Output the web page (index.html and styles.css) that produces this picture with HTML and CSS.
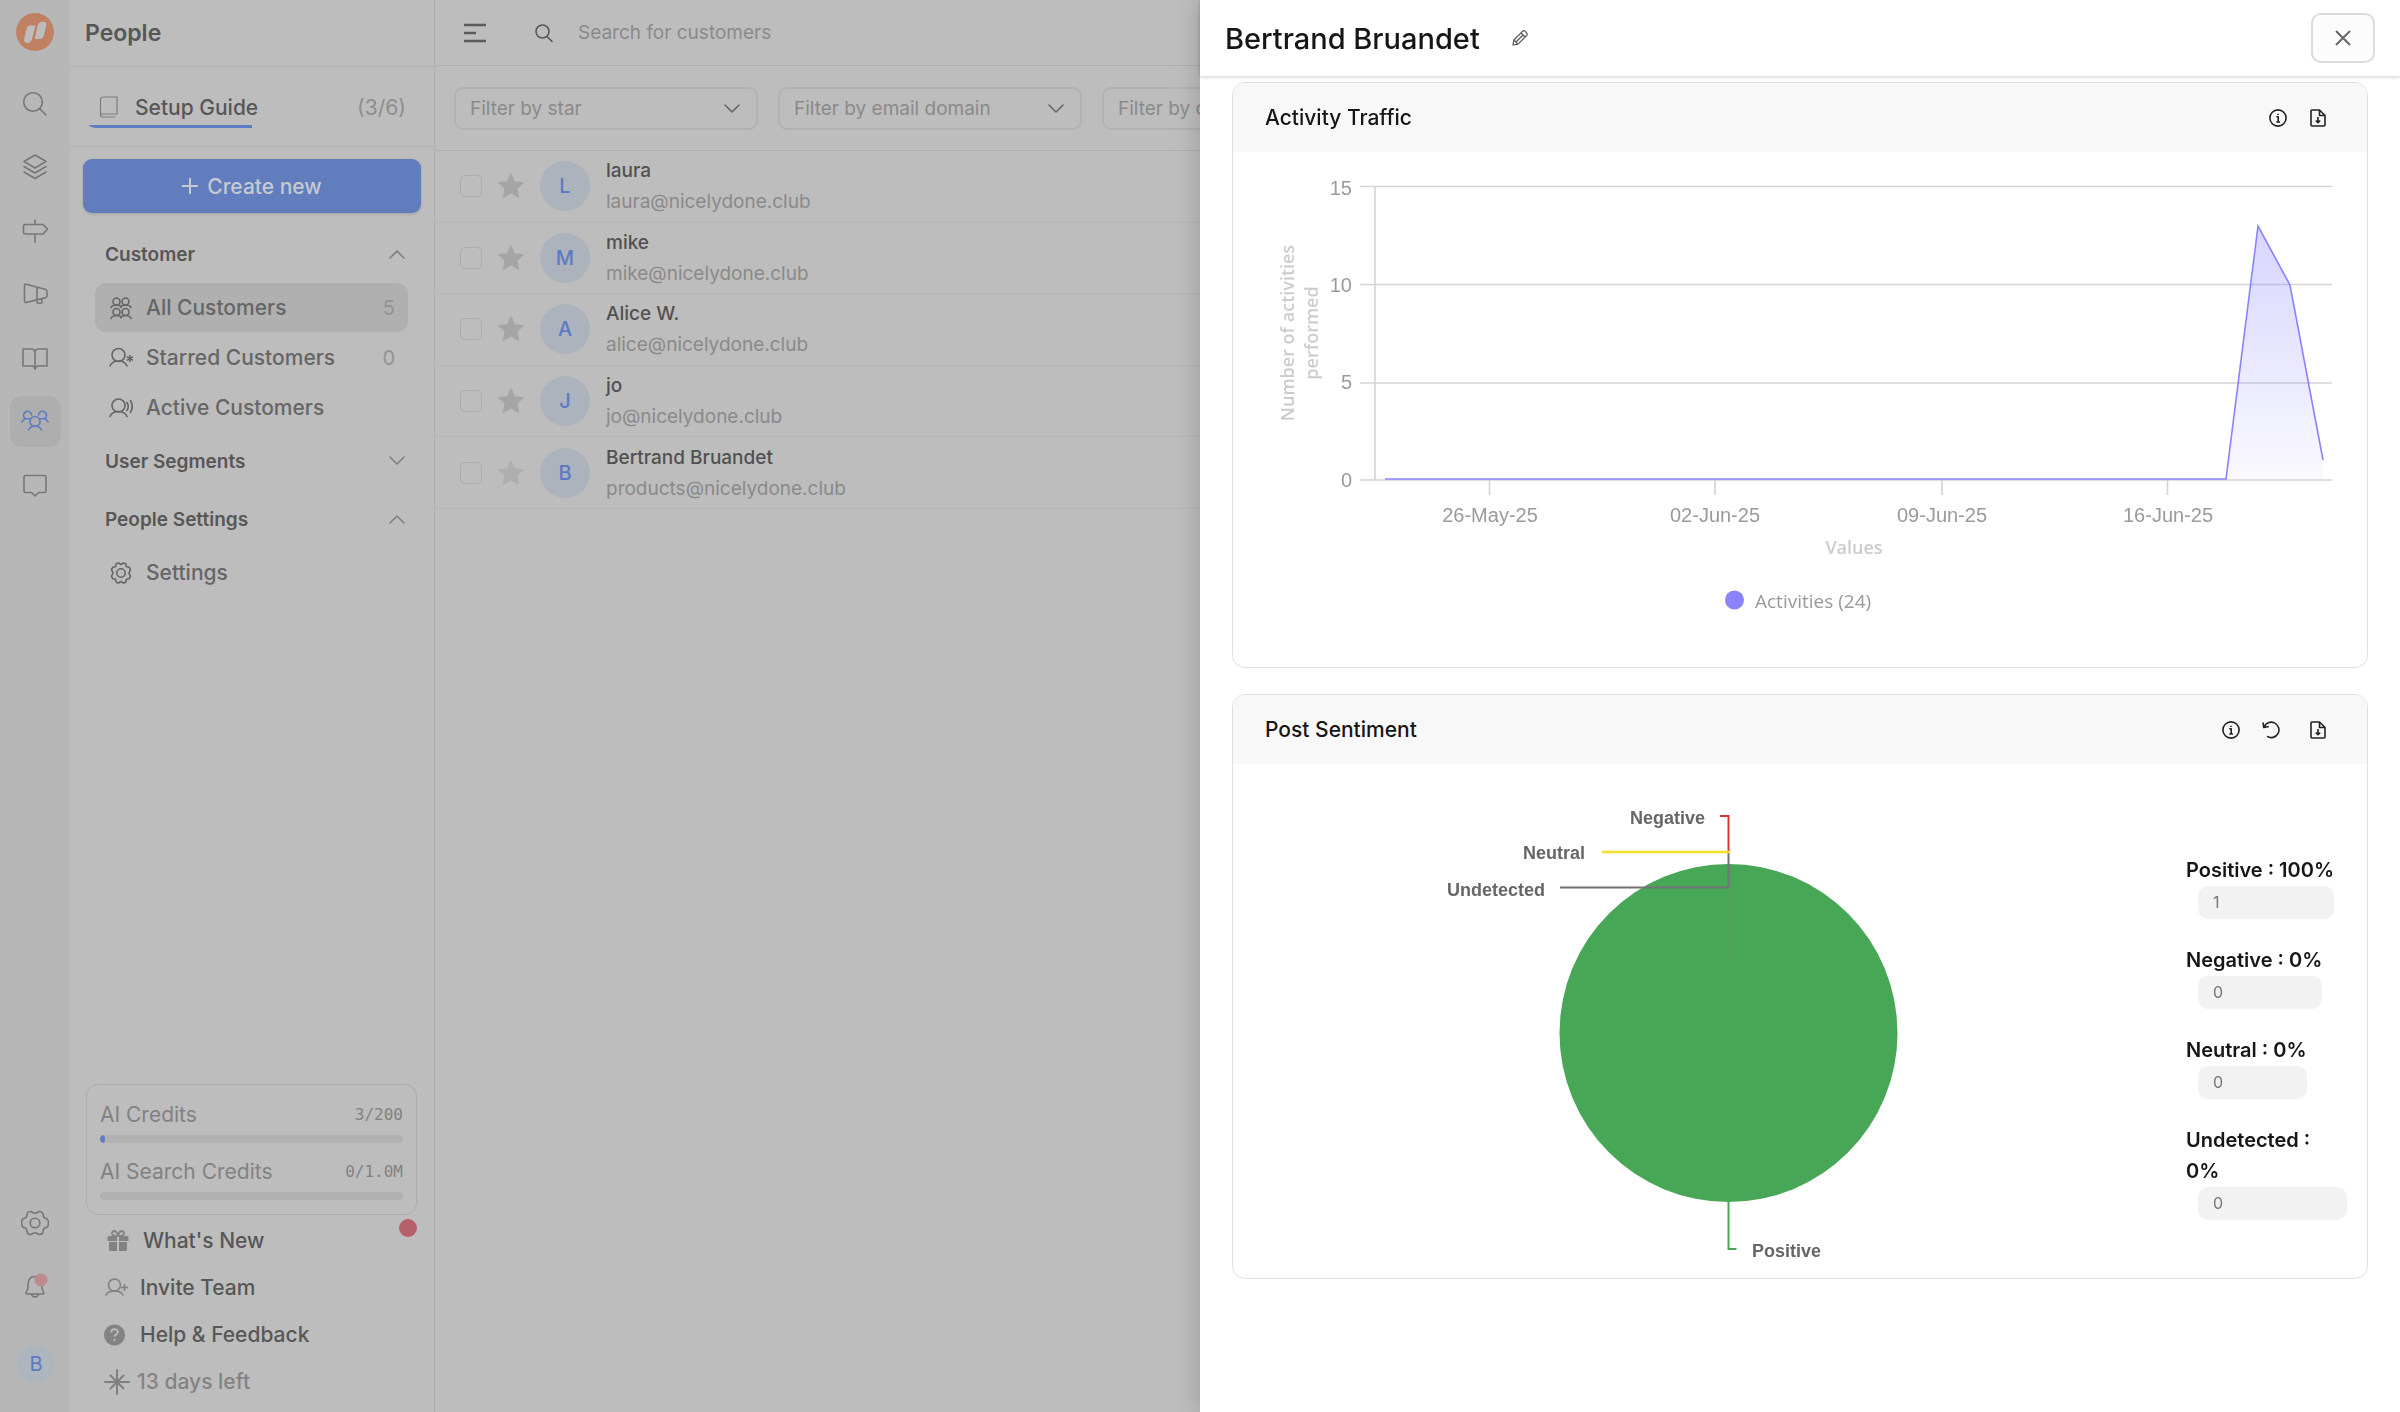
FILE: index.html
```html
<!DOCTYPE html>
<html lang="en">
<head>
    <meta charset="UTF-8">
    <meta name="viewport" content="width=device-width, initial-scale=1.0">
    <title>People</title>
    <link rel="stylesheet" href="styles.css">
</head>
<body>
    <div class="app">
        <!-- Icon rail -->
        <nav class="rail" aria-label="Products">
            <a class="logo" href="#" aria-label="Home">
                <svg width="38" height="38" viewBox="0 0 38 38"><circle cx="19" cy="19" r="19" fill="#c08163"/><path d="M14 12.500h5.500l-3.700 14q-1 3.500-4.300 3.500-4 0-3.300-4l2.300-10q1-3.500 3.500-3.500zM24.500 9q6.500-1.500 5.800 3.500l-2.300 9.500q-1 4-4 4h-5.300l3-13.500q.8-3 2.800-3.500z" fill="#bdbdbd"/></svg>
            </a>
            <div class="rail-items">
                <a class="rail-item" href="#" aria-label="Search"><svg class="icon" width="26" height="26" viewBox="0 0 26 26"><circle cx="11" cy="11" r="9.300"/><path d="M17.500 17.500l6.500 6.500"/></svg></a>
                <a class="rail-item" href="#" aria-label="Feedback"><svg class="icon" width="26" height="26" viewBox="0 0 26 26"><path d="M13 1l11 6.500-11 6.500-11-6.500zM2 12.500l11 6.500 11-6.500M2 18l11 6.500 11-6.500"/></svg></a>
                <a class="rail-item" href="#" aria-label="Roadmap"><svg class="icon" width="26" height="26" viewBox="0 0 26 26"><path d="M13 2v4.500M13 16v8.500M3 6.500h18l4.500 4.700-4.500 4.800h-18q-1.500 0-1.500-1.500v-6.500q0-1.500 1.500-1.500z"/></svg></a>
                <a class="rail-item" href="#" aria-label="Announcements"><svg class="icon" width="26" height="26" viewBox="0 0 26 26"><path d="M2.500 4.500q0-1.500 1.500-1.200l19 5q2 .6 2 2v4.400q0 1.800-1.800 2.200l-19.200 4.600q-1.500.3-1.500-1.200zM15 6.500v12.500M15 19v2q0 1.200 1.200 1.200h2.600q1.200 0 1.200-1.200v-3"/></svg></a>
                <a class="rail-item" href="#" aria-label="Knowledge base"><svg class="icon" width="26" height="26" viewBox="0 0 26 26"><path d="M13 7q-.5-3-3.500-3h-8.500v17h9q2.300 0 3 3 .7-3 3-3h9v-17h-8.500q-3 0-3.500 3zM13 7v16"/></svg></a>
                <a class="rail-item active" href="#" aria-label="People"><svg class="icon" width="28" height="26" viewBox="0 0 28 26"><circle cx="14" cy="13.500" r="5"/><path d="M7.500 22q2-4 6.500-4t6.500 4M10.500 7a4 4 0 1 0-6 3.800q-2.500.6-3.500 3.200M17.500 7a4 4 0 1 1 6 3.800q2.500.6 3.500 3.200M4.500 10.800h4M23.500 10.800h-4"/></svg></a>
                <a class="rail-item" href="#" aria-label="Messages"><svg class="icon" width="26" height="26" viewBox="0 0 26 26"><path d="M3.500 3.500h19q1.500 0 1.500 1.500v14q0 1.500-1.500 1.500h-6l-3.500 3.500-3.500-3.500h-6q-1.500 0-1.500-1.500v-14q0-1.500 1.500-1.500z"/></svg></a>
            </div>
            <div class="rail-bottom">
                <a class="rail-item" href="#" aria-label="Settings"><svg class="icon" width="28" height="26" viewBox="0 0 28 26"><circle cx="14" cy="13" r="4.800"/><path d="M10 1.500l2.800 1.500h2.400l2.800-1.500q2.500-.3 3.600 1.500l.9 3.500 1.200 1.500 2.300.8q1.500 1.700 1.500 4.200t-1.500 4.200l-2.300.8-1.200 1.500-.9 3.500q-1.100 1.800-3.600 1.500l-2.800-1.500h-2.400l-2.800 1.500q-2.500.3-3.600-1.500l-.9-3.500-1.200-1.500-2.300-.8q-1.500-1.700-1.500-4.200t1.500-4.200l2.300-.8 1.200-1.500.9-3.500q1.100-1.800 3.600-1.500z"/></svg></a>
                <a class="rail-item" href="#" aria-label="Notifications"><svg class="icon" width="26" height="26" viewBox="0 0 26 26"><path d="M6 11q.5-7.500 7-7.500t7 7.500v4.500l2 4.500q.2 1-1 1h-16q-1.200 0-1-1l2-4.500zM9.500 21.500q1 2.500 3.500 2.500t3.500-2.500"/><circle class="dot" cx="19" cy="7" r="6.500"/></svg></a>
                <span class="rail-avatar">B</span>
            </div>
        </nav>

        <!-- Sidebar -->
        <aside class="sidebar">
            <h1 class="sidebar-title">People</h1>
            <div class="setup">
                <a class="setup-link" href="#">
                    <svg class="icon thin" width="20" height="22" viewBox="0 0 20 22"><path d="M1.500 19v-15q0-3 3-3h13.500v17h-14q-2.500 0-2.500 1.500t2.500 1.500h12"/></svg>
                    <span>Setup Guide</span>
                    <span class="setup-count">(3/6)</span>
                </a>
                <div class="setup-track"><div class="setup-bar"></div></div>
            </div>
            <button class="create" type="button">
                <svg width="16" height="16" viewBox="0 0 16 16"><path d="M8 0v16M0 8h16"/></svg>
                Create new
            </button>

            <button class="group" type="button">Customer <svg class="icon chevron" width="16" height="10" viewBox="0 0 16 10"><path d="M1 9l7-7 7 7"/></svg></button>
            <a class="item selected" href="#">
                <svg class="icon" width="24" height="24" viewBox="0 0 24 24"><circle cx="7.500" cy="5.500" r="3.500"/><circle cx="16.500" cy="5.500" r="3.500"/><circle cx="7.500" cy="16" r="3.500"/><circle cx="16.500" cy="16" r="3.500"/><path d="M2 11.500q1-2.500 5.500-2.500t4.500 2.500q0-2.500 4.500-2.500t5.500 2.500M2 22.500q1-3 5.500-3t4.500 2.500q0-2.500 4.500-2.500t5.500 3"/></svg>
                <span>All Customers</span><span class="count">5</span>
            </a>
            <a class="item" href="#">
                <svg class="icon" width="24" height="24" viewBox="0 0 24 24"><circle cx="9.500" cy="9" r="6.500"/><path d="M1 20q2-5 8.500-5t8.500 5M21 9.500v6M18.400 11l5.200 3M23.600 11l-5.200 3"/></svg>
                <span>Starred Customers</span><span class="count">0</span>
            </a>
            <a class="item" href="#">
                <svg class="icon" width="24" height="24" viewBox="0 0 24 24"><circle cx="9.500" cy="9.500" r="6.500"/><path d="M1 20.500q2-5 8.500-5t8.500 5M18 6.500q2.500 4 0 8M21.500 4.500q3.500 6 0 12"/></svg>
                <span>Active Customers</span>
            </a>
            <button class="group" type="button">User Segments <svg class="icon chevron" width="16" height="10" viewBox="0 0 16 10"><path d="M1 1l7 7 7-7"/></svg></button>
            <button class="group" type="button">People Settings <svg class="icon chevron" width="16" height="10" viewBox="0 0 16 10"><path d="M1 9l7-7 7 7"/></svg></button>
            <a class="item" href="#">
                <svg class="icon" width="24" height="24" viewBox="0 0 24 24"><circle cx="12" cy="12" r="4.200"/><path d="M9.500 2l2.500 1.500 2.500-1.500 2.300.8.600 2.900 2.900.6 1.200 2.400-1.500 3.300 1.500 3.300-1.200 2.400-2.900.6-.6 2.900-2.300.8-2.500-1.500-2.500 1.500-2.300-.8-.6-2.900-2.900-.6-1.200-2.400 1.500-3.300-1.500-3.300 1.200-2.400 2.900-.6.600-2.900z"/></svg>
                <span>Settings</span>
            </a>

            <div class="sidebar-foot">
                <div class="credits">
                    <div class="credit-row"><span>AI Credits</span><span class="mono">3/200</span></div>
                    <div class="meter"><div class="meter-bar"></div></div>
                    <div class="credit-row second"><span>AI Search Credits</span><span class="mono">0/1.0M</span></div>
                    <div class="meter"></div>
                </div>
                <a class="foot-link whats-new" href="#">
                    <svg class="solid" width="24" height="22" viewBox="0 0 24 22"><path d="M2.500 6h8.500v5h-9.500v-3.500q0-1.500 1-1.500zM13 6h8.500q1 0 1 1.500v3.500h-9.500zM3 12h8v9h-6.500q-1.500 0-1.500-1.500zM13 12h8v7.500q0 1.500-1.500 1.500h-6.500z"/><path class="line" d="M12 6q-1-5-4-5-2.500.3-2 3 .5 2 6 2 5.500 0 6-2 .5-2.700-2-3-3 0-4 5z"/></svg>
                    <span>What's New</span>
                </a>
                <a class="foot-link" href="#">
                    <svg class="icon soft" width="24" height="22" viewBox="0 0 24 22"><circle cx="10.500" cy="8" r="6"/><path d="M2 18q2-4 8.500-4t8.500 4M20.500 7.500v6M17.500 10.500h6"/></svg>
                    <span>Invite Team</span>
                </a>
                <a class="foot-link" href="#">
                    <svg class="solid" width="24" height="22" viewBox="0 0 24 22"><circle cx="10.500" cy="11" r="10.500"/><path class="mark" d="M7.200 8.500q.2-3.300 3.300-3.300t3.300 2.800q0 1.500-1.600 2.500t-1.700 2.200M10.500 15v2"/></svg>
                    <span>Help &amp; Feedback</span>
                </a>
                <a class="foot-link days" href="#">
                    <svg class="icon soft bold" width="26" height="26" viewBox="0 0 26 26"><path d="M13 1v24M1 13h24M6.500 6.500l13 13M19.500 6.500l-13 13"/></svg>
                    <span>13 days left</span>
                </a>
            </div>
        </aside>

        <!-- Customer list -->
        <main class="main">
            <header class="topbar">
                <button class="menu" type="button" aria-label="Toggle sidebar"><svg width="22" height="20" viewBox="0 0 22 20"><path d="M0 2h22M0 10h12M0 18h22"/></svg></button>
                <label class="search">
                    <svg class="icon" width="18" height="20" viewBox="0 0 18 20"><circle cx="7.500" cy="8.500" r="6.500"/><path d="M12 13.500l5 5"/></svg>
                    <input type="text" placeholder="Search for customers" aria-label="Search for customers">
                </label>
            </header>
            <div class="filters">
                <label class="filter">
                    <select aria-label="Filter by star"><option>Filter by star</option></select>
                    <svg class="icon" width="16" height="10" viewBox="0 0 16 10"><path d="M1 1l7 7 7-7"/></svg>
                </label>
                <label class="filter">
                    <select aria-label="Filter by email domain"><option>Filter by email domain</option></select>
                    <svg class="icon" width="16" height="10" viewBox="0 0 16 10"><path d="M1 1l7 7 7-7"/></svg>
                </label>
                <label class="filter">
                    <select aria-label="Filter by company"><option>Filter by company</option></select>
                    <svg class="icon" width="16" height="10" viewBox="0 0 16 10"><path d="M1 1l7 7 7-7"/></svg>
                </label>
            </div>
            <ul class="customers">
                <li class="customer">
                    <input type="checkbox" aria-label="Select laura">
                    <svg class="star" width="28" height="28" viewBox="0 0 28 28"><path d="M14 2l3.400 8 8.600.8-6.500 5.700 1.900 8.500-7.400-4.400-7.400 4.400 1.900-8.500-6.500-5.700 8.600-.8z"/></svg>
                    <span class="avatar">L</span>
                    <div><div class="name">laura</div><div class="email">laura@nicelydone.club</div></div>
                </li>
                <li class="customer">
                    <input type="checkbox" aria-label="Select mike">
                    <svg class="star" width="28" height="28" viewBox="0 0 28 28"><path d="M14 2l3.400 8 8.600.8-6.500 5.700 1.900 8.500-7.400-4.400-7.400 4.400 1.900-8.500-6.500-5.700 8.600-.8z"/></svg>
                    <span class="avatar">M</span>
                    <div><div class="name">mike</div><div class="email">mike@nicelydone.club</div></div>
                </li>
                <li class="customer">
                    <input type="checkbox" aria-label="Select Alice W.">
                    <svg class="star" width="28" height="28" viewBox="0 0 28 28"><path d="M14 2l3.400 8 8.600.8-6.500 5.700 1.900 8.500-7.400-4.400-7.400 4.400 1.900-8.500-6.500-5.700 8.600-.8z"/></svg>
                    <span class="avatar">A</span>
                    <div><div class="name">Alice W.</div><div class="email">alice@nicelydone.club</div></div>
                </li>
                <li class="customer">
                    <input type="checkbox" aria-label="Select jo">
                    <svg class="star" width="28" height="28" viewBox="0 0 28 28"><path d="M14 2l3.400 8 8.600.8-6.500 5.700 1.900 8.500-7.400-4.400-7.400 4.400 1.900-8.500-6.500-5.700 8.600-.8z"/></svg>
                    <span class="avatar">J</span>
                    <div><div class="name">jo</div><div class="email">jo@nicelydone.club</div></div>
                </li>
                <li class="customer">
                    <input type="checkbox" aria-label="Select Bertrand Bruandet">
                    <svg class="star faded" width="28" height="28" viewBox="0 0 28 28"><path d="M14 2l3.400 8 8.600.8-6.500 5.700 1.900 8.500-7.400-4.400-7.400 4.400 1.900-8.500-6.500-5.700 8.600-.8z"/></svg>
                    <span class="avatar">B</span>
                    <div><div class="name">Bertrand Bruandet</div><div class="email">products@nicelydone.club</div></div>
                </li>
            </ul>
        </main>
    </div>

    <!-- Customer drawer -->
    <section class="drawer" role="dialog" aria-label="Bertrand Bruandet">
        <header class="drawer-head">
            <h2>Bertrand Bruandet</h2>
            <button class="edit" type="button" aria-label="Edit name"><svg class="glyph slim" width="18" height="18" viewBox="0 0 18 18"><path d="M2 16l.8-5 8.700-8.700q1.300-1.200 2.600 0l1.600 1.600q1.200 1.300 0 2.600l-8.700 8.700zM2.800 11l4.200 4.200M10 4l4 4M5 13l7-7"/></svg></button>
            <button class="close" type="button" aria-label="Close"><svg width="16" height="16" viewBox="0 0 16 16"><path d="M1 1l14 14M15 1l-14 14"/></svg></button>
        </header>
        <div class="drawer-body">
            <article class="card">
                <header class="card-head">
                    <h3>Activity Traffic</h3>
                    <div class="card-actions">
                        <button type="button" aria-label="About this chart"><svg class="glyph" width="18" height="18" viewBox="0 0 18 18"><circle cx="9" cy="9" r="8.100"/><path d="M7.300 7.800h1.900v5M7.300 13h3.700M9 4.700v1.200"/></svg></button>
                        <button type="button" aria-label="Export"><svg class="glyph" width="18" height="18" viewBox="0 0 18 18"><path d="M10.500 1h-7.500q-1 0-1 1v14q0 1 1 1h12q1 0 1-1v-9.500zM10.500 1v5.500h5.500M9 8v5.500M6.800 11.500l2.200 2.200 2.200-2.200"/></svg></button>
                    </div>
                </header>
                <svg class="chart" viewBox="0 0 1134 515" role="img" aria-label="Activities per day">
                    <defs>
                        <linearGradient id="area" x1="0" y1="0" x2="0" y2="1">
                            <stop offset="0" stop-color="#8983ff" stop-opacity=".34"/>
                            <stop offset="1" stop-color="#8983ff" stop-opacity=".05"/>
                        </linearGradient>
                    </defs>
                    <g class="grid">
                        <path d="M127 34.500h972M127 132.500h972M127 231h972M127 328h972M142 34.500v293.500"/>
                        <path d="M256.500 328v15M482 328v15M709 328v15M934.500 328v15"/>
                    </g>
                    <path d="M152 327h841l32-253 32 59 33 175v19z" fill="url(#area)"/>
                    <path class="series" d="M152 327h841l32-253 32 59 33 175"/>
                    <g class="tick" text-anchor="end">
                        <text x="119" y="43">15</text>
                        <text x="119" y="140">10</text>
                        <text x="119" y="237">5</text>
                        <text x="119" y="335">0</text>
                    </g>
                    <g class="tick" text-anchor="middle">
                        <text x="257" y="370">26-May-25</text>
                        <text x="482" y="370">02-Jun-25</text>
                        <text x="709" y="370">09-Jun-25</text>
                        <text x="935" y="370">16-Jun-25</text>
                    </g>
                    <g class="axis-title" text-anchor="middle">
                        <text transform="translate(61 181) rotate(-90)">Number of activities</text>
                        <text transform="translate(85 181) rotate(-90)">performed</text>
                        <text x="621" y="402">Values</text>
                    </g>
                    <circle cx="501.500" cy="448" r="9.500" fill="#8983ff"/>
                    <text class="legend" x="522" y="456">Activities (24)</text>
                </svg>
            </article>

            <article class="card">
                <header class="card-head">
                    <h3>Post Sentiment</h3>
                    <div class="card-actions">
                        <button type="button" aria-label="About this chart"><svg class="glyph" width="18" height="18" viewBox="0 0 18 18"><circle cx="9" cy="9" r="8.100"/><path d="M7.300 7.800h1.900v5M7.300 13h3.700M9 4.700v1.200"/></svg></button>
                        <button type="button" aria-label="Reset"><svg class="glyph" width="18" height="18" viewBox="0 0 18 18"><path d="M1 1.500l.8 5 5-1M2 6.300a7.700 7.700 0 1 1 3 9"/></svg></button>
                        <button class="spaced" type="button" aria-label="Export"><svg class="glyph" width="18" height="18" viewBox="0 0 18 18"><path d="M10.500 1h-7.500q-1 0-1 1v14q0 1 1 1h12q1 0 1-1v-9.500zM10.500 1v5.500h5.500M9 8v5.500M6.800 11.500l2.200 2.200 2.200-2.200"/></svg></button>
                    </div>
                </header>
                <div class="sentiment">
                    <svg class="pie" viewBox="0 0 953 514" role="img" aria-label="Post sentiment">
                        <circle cx="495.500" cy="269" r="169" fill="#47a756"/>
                        <path d="M495.500 438v47h8" stroke="#47a756"/>
                        <path d="M487 52h8.500v36" stroke="#d9343c"/>
                        <path d="M327 123.500h168.500v-35" stroke="#757176"/>
                        <path d="M369 88h127.500" stroke="#f5e02e" stroke-width="2.500"/>
                        <path d="M495.500 125v73" stroke="#57a25b" stroke-width="1"/>
                        <text x="397" y="60">Negative</text>
                        <text x="290" y="95">Neutral</text>
                        <text x="214" y="132">Undetected</text>
                        <text x="519" y="493">Positive</text>
                    </svg>
                    <ul class="scores">
                        <li><div class="score-label">Positive : 100%</div><div class="score-value">1</div></li>
                        <li><div class="score-label">Negative : 0%</div><div class="score-value">0</div></li>
                        <li><div class="score-label">Neutral : 0%</div><div class="score-value">0</div></li>
                        <li><div class="score-label">Undetected : 0%</div><div class="score-value">0</div></li>
                    </ul>
                </div>
            </article>
        </div>
    </section>
</body>
</html>
```
FILE: styles.css
```css
* {
    box-sizing: border-box;
}
body {
    margin: 0;
    font-family: Inter, "Liberation Sans", sans-serif;
    font-size: 20px;
    color: #575757;
    background: #bdbdbd;
    overflow: hidden;
}
h1, h2, h3, ul {
    margin: 0;
    padding: 0;
    list-style: none;
}
a {
    color: inherit;
    text-decoration: none;
}
button {
    font: inherit;
    color: inherit;
    background: none;
    border: none;
    padding: 0;
    cursor: pointer;
}
svg {
    display: block;
    fill: none;
    flex: none;
}
.icon {
    stroke: currentColor;
    stroke-width: 1.6;
    stroke-linecap: round;
    stroke-linejoin: round;
}
.thin {
    stroke-width: 1.2;
    color: #7d7d7d;
}
.app {
    display: flex;
    min-height: 100vh;
}

/* Icon rail */
.rail {
    width: 70px;
    flex: none;
    display: flex;
    flex-direction: column;
    align-items: center;
    padding: 13px 0 29px;
    background: #b7b7b7;
    color: #777;
}
.rail-items {
    display: flex;
    flex-direction: column;
    justify-content: space-between;
    height: 432px;
    margin-top: 27px;
}
.rail-item {
    display: flex;
    align-items: center;
    justify-content: center;
    width: 51px;
    height: 51px;
    border-radius: 12px;
}
.rail-item.active {
    background: #aeaeae;
    color: #5f7dc4;
}
.rail-bottom {
    display: flex;
    flex-direction: column;
    align-items: center;
    gap: 12px;
    margin-top: auto;
}
.rail-bottom .dot {
    fill: #c08a8a;
    stroke: none;
}
.rail-avatar {
    width: 38px;
    height: 38px;
    margin: 22px 0 0 2px;
    border-radius: 50%;
    background: #adb5bf;
    color: #5b7ac6;
    line-height: 38px;
    text-align: center;
}

/* Sidebar */
.sidebar {
    width: 365px;
    flex: none;
    display: flex;
    flex-direction: column;
    border-right: 1px solid #b0b0b0;
    font-size: 21px;
}
.sidebar-title {
    height: 67px;
    padding-left: 15px;
    border-bottom: 1px solid #b2b2b2;
    font-size: 23px;
    font-weight: 600;
    line-height: 66px;
}
.setup {
    height: 80px;
    padding: 22px 28px 0 19px;
    border-bottom: 1px solid #b4b4b4;
}
.setup-link {
    display: flex;
    align-items: center;
    gap: 16px;
    height: 36px;
    padding-left: 10px;
    font-weight: 450;
}
.setup-count {
    margin-left: auto;
    color: #8e8e8e;
    font-weight: 400;
}
.setup-track {
    width: 326px;
    height: 3px;
    overflow: hidden;
}
.setup-bar {
    width: 50%;
    height: 3px;
    background: #5f7dc4;
    border-bottom-left-radius: 8px 3px;
}
.create {
    display: flex;
    align-items: center;
    justify-content: center;
    gap: 9px;
    height: 54px;
    margin: 12px 13px;
    border-radius: 9px;
    background: #617dbd;
    box-shadow: 0 1px 3px rgba(0, 0, 0, 0.15);
    color: #c6c9d0;
    font-weight: 450;
}
.create svg {
    stroke: currentColor;
    stroke-width: 2;
}
.group {
    display: flex;
    align-items: center;
    justify-content: space-between;
    height: 58px;
    padding: 0 29px 0 35px;
    font-size: 19px;
    font-weight: 600;
}
.chevron {
    color: #808080;
}
.item {
    display: flex;
    align-items: center;
    gap: 13px;
    height: 49px;
    margin: 0 26px 1px 25px;
    padding: 0 13px 0 14px;
    border-radius: 11px;
    color: #666;
    font-weight: 450;
}
.item.selected {
    background: #b0b0b0;
}
.group + .item + .item + .item {
    margin-bottom: 0;
}
.count {
    margin-left: auto;
    color: #939393;
    font-size: 20px;
    font-weight: 400;
}
.sidebar-foot {
    margin-top: auto;
    padding-bottom: 7px;
}
.credits {
    margin: 0 17px 2px 16px;
    padding: 13px 13px 14px;
    border: 1px solid #adadad;
    border-radius: 12px;
    color: #828282;
}
.credit-row {
    display: flex;
    align-items: center;
    justify-content: space-between;
    height: 32px;
    margin-bottom: 5px;
}
.credit-row.second {
    margin-top: 12px;
}
.mono {
    font-family: "DejaVu Sans Mono", monospace;
    font-size: 16px;
}
.meter {
    height: 8px;
    border-radius: 4px;
    background: #b1b1b1;
    overflow: hidden;
}
.meter-bar {
    width: 5px;
    height: 8px;
    border-radius: 50%;
    background: #5f7dc4;
}
.foot-link {
    display: flex;
    align-items: center;
    gap: 12px;
    height: 47px;
    padding-left: 34px;
    font-weight: 450;
}
.soft {
    color: #808080;
}
.solid {
    fill: #838383;
}
.solid .line {
    fill: none;
    stroke: #838383;
    stroke-width: 1.8;
}
.solid .mark {
    fill: none;
    stroke: #bdbdbd;
    stroke-width: 1.8;
}
.whats-new {
    position: relative;
    gap: 13px;
    padding-left: 36px;
}
.whats-new::after {
    content: "";
    position: absolute;
    top: 2px;
    right: 17px;
    width: 18px;
    height: 18px;
    border-radius: 50%;
    background: #b5606a;
}
.days {
    gap: 7px;
    color: #838383;
}
.bold {
    stroke-width: 2;
}

/* Customer list */
.main {
    flex: 1;
    min-width: 0;
}
.topbar {
    display: flex;
    align-items: center;
    height: 66px;
    padding-left: 29px;
    border-bottom: 1px solid #b0b0b0;
}
.menu svg {
    stroke: #5c5c5c;
    stroke-width: 2.4;
}
.search {
    display: flex;
    align-items: center;
    flex: 1;
    gap: 25px;
    margin-left: 49px;
}
.search input {
    width: 400px;
    padding: 0;
    border: none;
    outline: none;
    background: none;
    font: inherit;
    font-size: 19px;
}
.search input::placeholder {
    color: #8a8a8a;
    opacity: 1;
}
.filters {
    display: flex;
    align-items: center;
    gap: 20px;
    height: 85px;
    padding-left: 19px;
    border-bottom: 1px solid #b0b0b0;
}
.filter {
    position: relative;
    width: 304px;
    flex: none;
}
.filter select {
    appearance: none;
    display: block;
    width: 100%;
    height: 43px;
    padding: 0 14px;
    border: 2px solid #b2b2b2;
    border-radius: 9px;
    background: none;
    color: #8a8a8a;
    font: inherit;
    font-size: 19px;
}
.filter svg {
    position: absolute;
    top: 17px;
    right: 18px;
    color: #666;
}
.customers {
    display: grid;
    grid-template-rows: repeat(5, 1fr);
    height: 358px;
}
.customer {
    display: flex;
    align-items: center;
    padding-left: 25px;
    border-bottom: 1px solid #b5b5b5;
}
.customer input {
    appearance: none;
    width: 22px;
    height: 22px;
    margin: 0;
    border: 1px solid #adadad;
    border-radius: 5px;
}
.star {
    margin: 0 15px;
    fill: #a5a5a5;
    stroke: #a5a5a5;
    stroke-width: 1.5;
    stroke-linejoin: round;
}
.star.faded {
    fill: #afafaf;
    stroke: #afafaf;
}
.avatar {
    width: 50px;
    height: 50px;
    margin-right: 16px;
    border-radius: 50%;
    background: #adb3bc;
    color: #5b7ac6;
    font-weight: 500;
    line-height: 50px;
    text-align: center;
}
.name, .email {
    font-size: 19px;
    line-height: 31px;
}
.name {
    color: #515151;
    font-weight: 500;
}
.email {
    color: #8a8a8a;
}

/* Drawer */
.drawer {
    position: fixed;
    top: 0;
    right: 0;
    bottom: 0;
    width: 50%;
    background: #fff;
    box-shadow: 0 0 24px rgba(0, 0, 0, 0.2);
    color: #161616;
}
.drawer-head {
    position: relative;
    display: flex;
    align-items: center;
    height: 76px;
    padding: 0 25px;
    background: #fff;
    box-shadow: 0 1px 4px rgba(0, 0, 0, 0.2);
}
.drawer-head h2 {
    font-size: 29px;
    font-weight: 450;
}
.edit {
    margin-left: 31px;
}
.close {
    display: flex;
    align-items: center;
    justify-content: center;
    width: 64px;
    height: 50px;
    margin-left: auto;
    border: 2px solid #dcdcdc;
    border-radius: 10px;
    background: #fcfcfc;
}
.close svg {
    stroke: #666;
    stroke-width: 2;
}
.glyph {
    stroke: #222;
    stroke-width: 1.6;
    stroke-linejoin: round;
}
.slim {
    stroke: #555;
    stroke-width: 1.2;
}
.drawer-body {
    display: flex;
    flex-direction: column;
    gap: 26px;
    padding: 6px 32px;
}
.card {
    border: 1px solid #e0e0e0;
    border-radius: 13px;
    overflow: hidden;
}
.card-head {
    display: flex;
    align-items: center;
    justify-content: space-between;
    height: 69px;
    padding: 0 40px 0 32px;
    background: #f8f8f8;
}
.card-head h3 {
    font-size: 21px;
    font-weight: 550;
}
.card-actions {
    display: flex;
    align-items: center;
    gap: 22px;
}
.spaced {
    margin-left: 7px;
}
.chart {
    width: 100%;
}
.grid {
    stroke: #d3d3d3;
    stroke-width: 1.6;
}
.series {
    stroke: #8983ff;
    stroke-width: 1.6;
}
.tick {
    fill: #9a9a9a;
    font: 20px "Liberation Sans", sans-serif;
}
.axis-title {
    fill: #ccc;
    font: 600 18px "Open Sans", sans-serif;
}
.legend {
    fill: #999;
    font: 19px "Open Sans", sans-serif;
}
.sentiment {
    display: flex;
}
.pie {
    flex: 1;
    min-width: 0;
    stroke-width: 2;
}
.pie text {
    fill: #666;
    font: bold 18px "Liberation Sans", sans-serif;
}
.scores {
    display: flex;
    flex-direction: column;
    align-items: flex-start;
    gap: 26px;
    width: 161px;
    margin: 91px 20px 0 0;
}
.score-label {
    font-weight: 600;
    line-height: 31px;
}
.score-value {
    height: 33px;
    margin-left: 12px;
    padding-left: 15px;
    border-radius: 10px;
    background: #f2f2f2;
    color: #777;
    font-size: 16px;
    line-height: 33px;
}
```
